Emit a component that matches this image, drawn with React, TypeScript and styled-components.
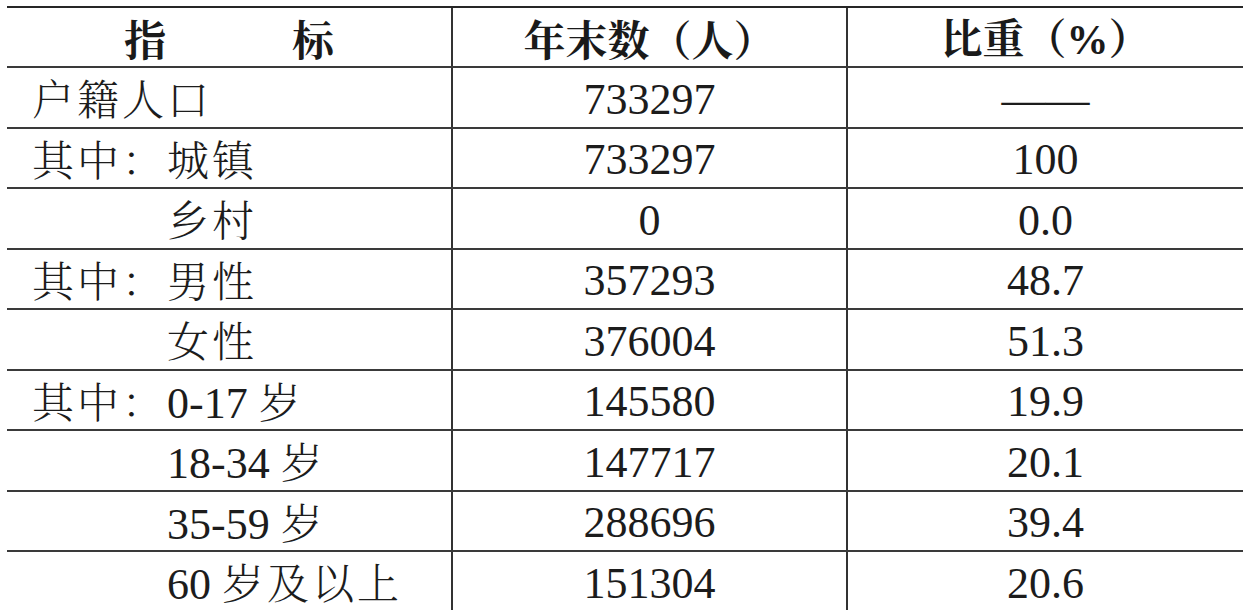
import React from "react";
import styled, { createGlobalStyle } from "styled-components";

const GlobalStyle = createGlobalStyle`
  html, body {
    margin: 0;
    padding: 0;
    background: #ffffff;
    overflow: hidden;
  }
`;

const Page = styled.div`
  padding: 6px 2px 0 7px;
  height: 610px;
  box-sizing: border-box;
  color: #1c1c1c;
`;

const Table = styled.div`
  width: 1236px;
  border-top: 2px solid #262626;
`;

const Row = styled.div<{ $head?: boolean }>`
  display: grid;
  grid-template-columns: 444px 395px 397px;
  height: ${(p) => (p.$head ? "60px" : "60.5px")};
  box-sizing: border-box;
  border-bottom: 2px solid #3a3a3a;
`;

const Cell = styled.div<{ $first?: boolean; $indent?: number; $head?: boolean }>`
  display: flex;
  align-items: center;
  justify-content: ${(p) => (p.$first && !p.$head ? "flex-start" : "center")};
  box-sizing: border-box;
  padding-left: ${(p) => (p.$first && !p.$head ? 25 + (p.$indent || 0) : 0)}px;
  padding-top: ${(p) => (p.$head ? 2 : 5)}px;
  border-left: ${(p) => (p.$first ? "none" : "2px solid #333333")};
  font-family: "Liberation Serif", "Tinos", "Times New Roman", serif;
  font-size: 44px;
  line-height: 1;
  white-space: pre;
`;

const Num = styled.span`
  font-family: "Liberation Serif", "Tinos", "Times New Roman", serif;
`;

const HeadText = styled.span`
  font-family: "Noto Serif CJK SC", "Noto Sans CJK SC", serif;
  font-weight: 700;
  font-size: 42px;
  color: #1a1a1a;
`;

const Pct = styled.span`
  font-family: "Liberation Serif", "Times New Roman", serif;
  font-weight: 700;
`;

const Han = styled.span`
  font-family: "Noto Serif CJK SC", "Noto Sans CJK SC", serif;
  font-weight: 300;
  font-size: 42px;
  letter-spacing: 3px;
`;

type RowData = {
  label: string;
  indent?: boolean;
  count: string;
  share: string;
};

const rows: RowData[] = [
  { label: "户籍人口", count: "733297", share: "——" },
  { label: "其中：城镇", count: "733297", share: "100" },
  { label: "乡村", indent: true, count: "0", share: "0.0" },
  { label: "其中：男性", count: "357293", share: "48.7" },
  { label: "女性", indent: true, count: "376004", share: "51.3" },
  { label: "其中：0-17 岁", count: "145580", share: "19.9" },
  { label: "18-34 岁", indent: true, count: "147717", share: "20.1" },
  { label: "35-59 岁", indent: true, count: "288696", share: "39.4" },
  { label: "60 岁及以上", indent: true, count: "151304", share: "20.6" },
];

// chinese runs get their own size/spacing, digits stay in the serif
function Label({ text }: { text: string }) {
  const parts = text.split(/([\u4e00-\u9fff\uff1a]+)/).filter(Boolean);
  return (
    <span>
      {parts.map((part, i) =>
        /[\u4e00-\u9fff\uff1a]/.test(part) ? <Han key={i}>{part}</Han> : <Num key={i}>{part}</Num>
      )}
    </span>
  );
}

export default function App() {
  return (
    <Page>
      <GlobalStyle />
      <Table>
        <Row $head>
          <Cell $first $head>
            <HeadText>指　　　标</HeadText>
          </Cell>
          <Cell $head>
            <HeadText>年末数（人）</HeadText>
          </Cell>
          <Cell $head>
            <HeadText>
              比重（<Pct>%</Pct>）
            </HeadText>
          </Cell>
        </Row>
        {rows.map((r) => (
          <Row key={r.label}>
            <Cell $first $indent={r.indent ? 135 : 0}>
              <Label text={r.label} />
            </Cell>
            <Cell>
              <Num>{r.count}</Num>
            </Cell>
            <Cell>
              <Num>{r.share}</Num>
            </Cell>
          </Row>
        ))}
      </Table>
    </Page>
  );
}
